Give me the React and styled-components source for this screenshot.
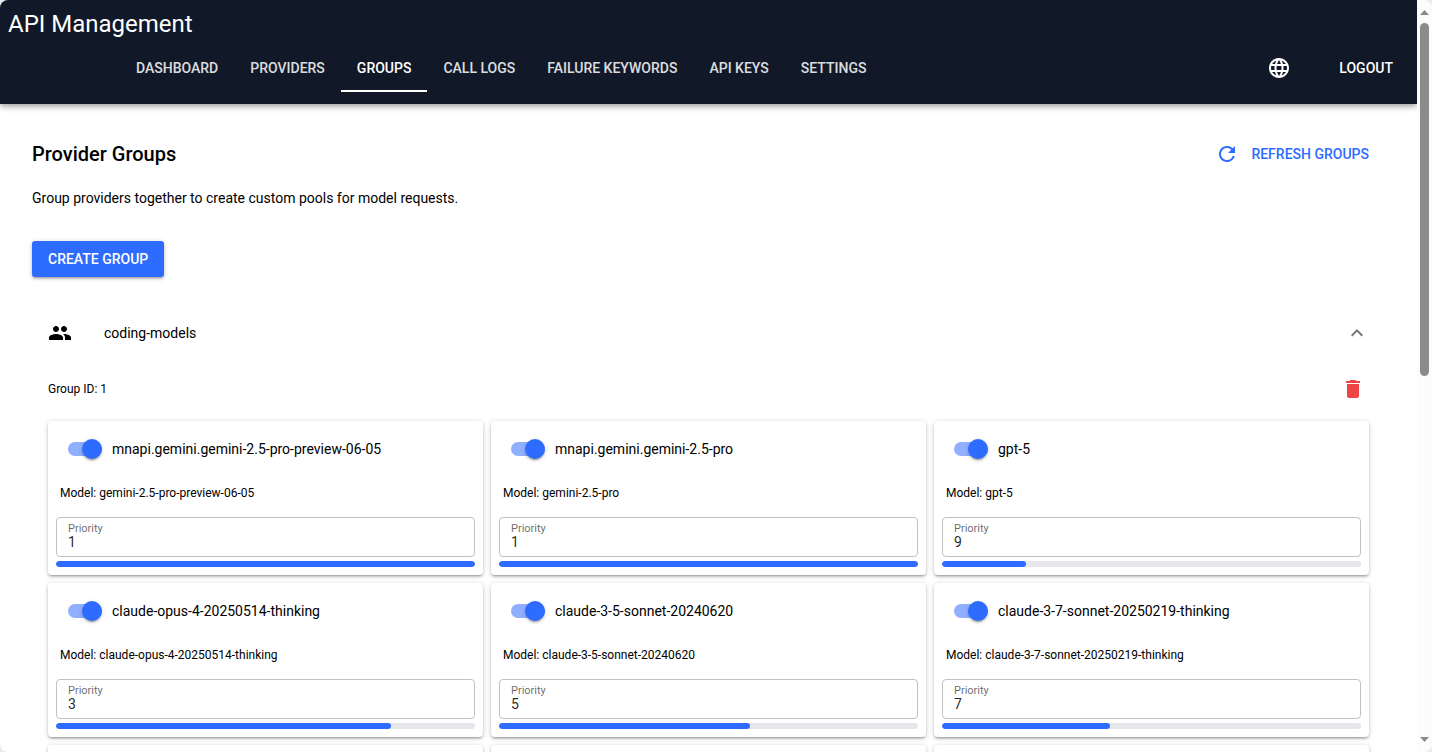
import React, { useState } from "react";
import styled, { createGlobalStyle, css } from "styled-components";
import {
  MdLanguage,
  MdRefresh,
  MdPeople,
  MdDelete,
  MdKeyboardArrowUp,
} from "react-icons/md";

const PRIMARY = "#2e6bff";
const NAVY = "#111827";

const GlobalStyle = createGlobalStyle`
  *, *::before, *::after { box-sizing: border-box; }
  body {
    margin: 0;
    background: #e9eaec;
    color: #000;
    font-family: Roboto, "Liberation Sans", sans-serif;
    font-size: 14px;
    line-height: 21px;
  }
  button, input { font: inherit; color: inherit; }
  h1, h2, p { margin: 0; }
`;

const Window = styled.div`
  display: flex;
  height: 100vh;
  overflow: hidden;
  border-radius: 8px;
  background: #fff;
`;

const Page = styled.div`
  flex: 1;
  min-width: 0;
  overflow: hidden;
`;

const Header = styled.header`
  display: flex;
  flex-direction: column;
  gap: 4px;
  padding: 8px 8px 12px;
  background: ${NAVY};
  color: #fff;
  box-shadow: 0 2px 4px -1px rgba(0, 0, 0, 0.2), 0 4px 5px rgba(0, 0, 0, 0.14),
    0 1px 10px rgba(0, 0, 0, 0.12);
`;

const AppTitle = styled.h1`
  font-size: 24px;
  font-weight: 400;
  line-height: 32px;
`;

const HeaderRow = styled.div`
  display: flex;
  align-items: center;
  justify-content: space-between;
  padding-left: 112px;
`;

const Tabs = styled.nav`
  display: flex;
`;

const Tab = styled.a`
  display: flex;
  align-items: center;
  height: 48px;
  padding: 0 16px;
  box-shadow: ${(p) => (p.$active ? "inset 0 -2px 0 #fff" : "none")};
  color: #fff;
  opacity: ${(p) => (p.$active ? 1 : 0.85)};
  font-weight: 500;
  text-decoration: none;
  text-transform: uppercase;
  white-space: nowrap;
`;

const HeaderActions = styled.div`
  display: flex;
  align-items: center;
  gap: 16px;
`;

const Button = styled.button`
  display: inline-flex;
  align-items: center;
  justify-content: center;
  gap: 12px;
  height: 36px;
  padding: 0 16px;
  border: 0;
  border-radius: 3px;
  background: transparent;
  font-weight: 500;
  text-transform: uppercase;
  white-space: nowrap;
  cursor: pointer;
  ${(p) =>
    p.$variant === "link" &&
    css`
      color: ${PRIMARY};
    `}
  ${(p) =>
    p.$variant === "filled" &&
    css`
      background: ${PRIMARY};
      color: #fff;
      box-shadow: 0 1px 5px rgba(0, 0, 0, 0.2), 0 2px 2px rgba(0, 0, 0, 0.14),
        0 3px 1px -2px rgba(0, 0, 0, 0.12);
    `}
`;

const Main = styled.main`
  display: flex;
  flex-direction: column;
  align-items: stretch;
  padding: 32px;
`;

const TitleRow = styled.div`
  display: flex;
  align-items: center;
  justify-content: space-between;
`;

const PageTitle = styled.h2`
  font-size: 20px;
  font-weight: 500;
  line-height: 32px;
`;

const Description = styled.p`
  margin: 16px 0 32px;
`;

const CreateRow = styled.div`
  display: flex;
  margin-bottom: 32px;
`;

const GroupToggle = styled.button`
  display: flex;
  align-items: center;
  gap: 32px;
  height: 48px;
  padding: 0 16px;
  border: 0;
  background: transparent;
  text-align: left;
  cursor: pointer;
`;

const GroupName = styled.span`
  flex: 1;
`;

const GroupBody = styled.div`
  display: flex;
  flex-direction: column;
  gap: 16px;
  padding: 16px;
`;

const GroupMeta = styled.div`
  display: flex;
  align-items: center;
  justify-content: space-between;
  height: 32px;
  font-size: 12px;
  line-height: 20px;
`;

const DeleteButton = styled.button`
  display: flex;
  align-items: center;
  justify-content: center;
  width: 32px;
  height: 32px;
  padding: 0;
  border: 0;
  background: transparent;
  color: #ef4444;
  cursor: pointer;
`;

const CardGrid = styled.div`
  display: grid;
  grid-template-columns: repeat(3, minmax(0, 1fr));
  gap: 8px;
`;

const Card = styled.article`
  display: flex;
  flex-direction: column;
  min-height: 154px;
  padding: 8px;
  border-radius: 4px;
  background: #fff;
  box-shadow: 0 1px 5px rgba(0, 0, 0, 0.2), 0 2px 2px rgba(0, 0, 0, 0.14),
    0 3px 1px -2px rgba(0, 0, 0, 0.12);
`;

const SwitchRow = styled.label`
  display: flex;
  align-items: center;
  gap: 10px;
  height: 40px;
  padding-left: 12px;
  cursor: pointer;
`;

const Switch = styled.input`
  appearance: none;
  display: flex;
  align-items: center;
  flex: none;
  width: 34px;
  height: 14px;
  margin: 0;
  border-radius: 7px;
  background: rgba(0, 0, 0, 0.3);
  cursor: pointer;

  &::before {
    content: "";
    flex: none;
    width: 20px;
    height: 20px;
    border-radius: 50%;
    background: #fff;
    box-shadow: 0 3px 1px -2px rgba(0, 0, 0, 0.2),
      0 2px 2px rgba(0, 0, 0, 0.14), 0 1px 5px rgba(0, 0, 0, 0.12);
  }

  &:checked {
    justify-content: flex-end;
    background: #90afff;
  }

  &:checked::before {
    background: ${PRIMARY};
  }
`;

const ModelLine = styled.p`
  padding: 14px 4px;
  font-size: 12px;
  line-height: 20px;
`;

const Field = styled.label`
  display: flex;
  flex-direction: column;
  height: 40px;
  padding: 5px 11px;
  border: 1px solid #c2c2c2;
  border-radius: 4px;
`;

const FieldLabel = styled.span`
  color: rgba(0, 0, 0, 0.6);
  font-size: 11px;
  line-height: 12px;
`;

const FieldInput = styled.input`
  width: 100%;
  height: 14px;
  padding: 0;
  border: 0;
  outline: 0;
  background: transparent;
  color: rgba(0, 0, 0, 0.87);
  line-height: 14px;
`;

const Track = styled.div`
  height: 6px;
  margin-top: 4px;
  overflow: hidden;
  border-radius: 3px;
  background: #e5e7eb;
`;

const Bar = styled.div`
  height: 100%;
  border-radius: 3px;
  background: ${PRIMARY};
`;

const ScrollRail = styled.div`
  display: flex;
  flex-direction: column;
  align-items: center;
  flex: none;
  width: 15px;
  padding: 10px 0;
  background: #fcfcfc;
`;

const ScrollArrow = styled.span`
  width: 9px;
  height: 5px;
  background: #8b8b8b;
  clip-path: ${(p) =>
    p.$down
      ? "polygon(0 0, 100% 0, 50% 100%)"
      : "polygon(50% 0, 100% 100%, 0 100%)"};
`;

const ScrollLane = styled.div`
  flex: 1;
  width: 9px;
  margin: 8px 0;
`;

const ScrollThumb = styled.div`
  height: 50%;
  border-radius: 5px;
  background: #8b8b8b;
`;

const tabs = [
  "Dashboard",
  "Providers",
  "Groups",
  "Call Logs",
  "Failure Keywords",
  "API Keys",
  "Settings",
];

const providers = [
  { name: "mnapi.gemini.gemini-2.5-pro-preview-06-05", model: "gemini-2.5-pro-preview-06-05", priority: 1, share: 100 },
  { name: "mnapi.gemini.gemini-2.5-pro", model: "gemini-2.5-pro", priority: 1, share: 100 },
  { name: "gpt-5", model: "gpt-5", priority: 9, share: 20 },
  { name: "claude-opus-4-20250514-thinking", model: "claude-opus-4-20250514-thinking", priority: 3, share: 80 },
  { name: "claude-3-5-sonnet-20240620", model: "claude-3-5-sonnet-20240620", priority: 5, share: 60 },
  { name: "claude-3-7-sonnet-20250219-thinking", model: "claude-3-7-sonnet-20250219-thinking", priority: 7, share: 40 },
];

function ProviderCard({ name, model, priority, share }) {
  const [enabled, setEnabled] = useState(true);
  const [value, setValue] = useState(String(priority));
  return (
    <Card>
      <SwitchRow>
        <Switch
          type="checkbox"
          role="switch"
          checked={enabled}
          onChange={(e) => setEnabled(e.target.checked)}
        />
        <span>{name}</span>
      </SwitchRow>
      <ModelLine>Model: {model}</ModelLine>
      <Field>
        <FieldLabel>Priority</FieldLabel>
        <FieldInput
          type="text"
          inputMode="numeric"
          value={value}
          onChange={(e) => setValue(e.target.value)}
        />
      </Field>
      <Track>
        <Bar style={{ width: `${share}%` }} />
      </Track>
    </Card>
  );
}

export default function App() {
  const [open, setOpen] = useState(true);
  return (
    <>
      <GlobalStyle />
      <Window>
        <Page>
          <Header>
            <AppTitle>API Management</AppTitle>
            <HeaderRow>
              <Tabs>
                {tabs.map((t) => (
                  <Tab key={t} href="#" $active={t === "Groups"}>
                    {t}
                  </Tab>
                ))}
              </Tabs>
              <HeaderActions>
                <Button type="button" aria-label="Language">
                  <MdLanguage size={24} />
                </Button>
                <Button type="button">Logout</Button>
              </HeaderActions>
            </HeaderRow>
          </Header>
          <Main>
            <TitleRow>
              <PageTitle>Provider Groups</PageTitle>
              <Button type="button" $variant="link">
                <MdRefresh size={24} />
                Refresh Groups
              </Button>
            </TitleRow>
            <Description>
              Group providers together to create custom pools for model requests.
            </Description>
            <CreateRow>
              <Button type="button" $variant="filled">
                Create Group
              </Button>
            </CreateRow>
            <GroupToggle
              type="button"
              aria-expanded={open}
              onClick={() => setOpen(!open)}
            >
              <MdPeople size={24} />
              <GroupName>coding-models</GroupName>
              <MdKeyboardArrowUp size={24} color="#757575" />
            </GroupToggle>
            {open && (
              <GroupBody>
                <GroupMeta>
                  <span>Group ID: 1</span>
                  <DeleteButton type="button" aria-label="Delete group">
                    <MdDelete size={24} />
                  </DeleteButton>
                </GroupMeta>
                <CardGrid>
                  {providers.map((p) => (
                    <ProviderCard key={p.name} {...p} />
                  ))}
                  <Card />
                  <Card />
                  <Card />
                </CardGrid>
              </GroupBody>
            )}
          </Main>
        </Page>
        <ScrollRail aria-hidden="true">
          <ScrollArrow />
          <ScrollLane>
            <ScrollThumb />
          </ScrollLane>
          <ScrollArrow $down />
        </ScrollRail>
      </Window>
    </>
  );
}
